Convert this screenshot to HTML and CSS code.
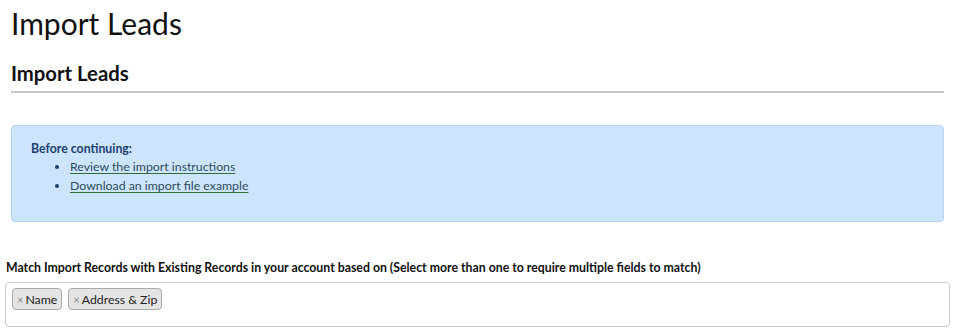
FILE: index.html
```html
<!DOCTYPE html>
<html lang="en">
<head>
<meta charset="utf-8">
<title>Import Leads</title>
<link rel="stylesheet" href="styles.css">
</head>
<body>
<div class="page">
  <h1 class="title">Import Leads</h1>
  <h2 class="subtitle">Import Leads</h2>
  <div class="alert">
    <div class="alert-head">Before continuing:</div>
    <ul class="alert-list">
      <li><a href="#">Review the import instructions</a></li>
      <li><a href="#">Download an import file example</a></li>
    </ul>
  </div>
</div>
<div class="field">
  <label class="field-label">Match Import Records with Existing Records in your account based on (Select more than one to require multiple fields to match)</label>
  <div class="select">
    <span class="tag"><span class="tag-x">×</span>Name</span>
    <span class="tag"><span class="tag-x">×</span>Address &amp; Zip</span>
  </div>
</div>
</body>
</html>
```

FILE: styles.css
```css
* { box-sizing: border-box; }
body {
  margin: 0;
  font-family: Lato, "Open Sans", sans-serif;
  color: #111;
  background: #fff;
}
.page {
  padding: 0 11px;
}
.title {
  margin: 0;
  padding-top: 4px;
  font-size: 30px;
  font-weight: 400;
  line-height: 38px;
  color: #111;
}
.subtitle {
  margin: 0;
  margin-top: 19px;
  font-size: 20.3px;
  font-weight: 700;
  line-height: 24px;
  padding-bottom: 6px;
  border-bottom: 2px solid #c6c8cc;
  color: #111;
}
.alert {
  margin-top: 32px;
  background: #cce5fc;
  border: 1px solid #b5d6f5;
  border-radius: 4px;
  height: 97px;
  padding: 14px 19px;
}
.alert-head {
  font-size: 12.3px;
  font-weight: 700;
  color: #1c3f72;
  line-height: 17px;
}
.alert-list {
  margin: 0;
  padding-left: 39px;
  font-size: 12.3px;
  line-height: 19px;
  color: #1c3f72;
}
.alert-list li {
  height: 19px;
}
.alert-list a {
  color: #2f4b5e;
  text-decoration: underline;
  text-decoration-color: #2f6b3a;
  text-underline-offset: 2px;
}
.field {
  padding: 0 5px;
  margin-top: 38px;
}
.field-label {
  display: block;
  padding-left: 1px;
  font-size: 12.3px;
  font-weight: 700;
  line-height: 16px;
  color: #111;
}
.select {
  margin-top: 6px;
  height: 45px;
  border: 1px solid #ccc;
  border-radius: 4px;
  padding: 5px 6px;
  display: flex;
  align-items: flex-start;
  gap: 6px;
}
.tag {
  display: inline-flex;
  align-items: center;
  height: 22px;
  padding: 0 4px 0 4px;
  background: #e4e4e4;
  border: 1px solid #aaa;
  border-radius: 4px;
  font-size: 12.3px;
  color: #222;
}
.tag-x {
  color: #888;
  font-size: 11px;
  margin-right: 2px;
}
```
